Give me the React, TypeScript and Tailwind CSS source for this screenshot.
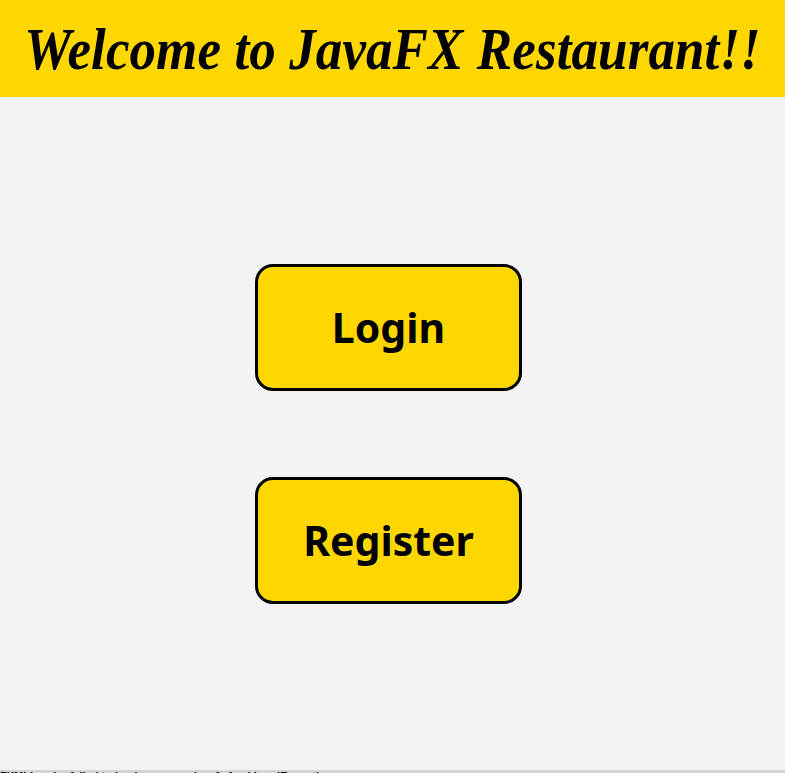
import React from 'react';

const MenuButton: React.FC<{ label: string }> = ({ label }) => (
  <button className="w-[267px] h-[127px] rounded-[18px] border-[3px] border-black bg-[#ffd700] text-[41px] font-bold text-black font-['Noto_Sans',sans-serif] leading-none">
    {label}
  </button>
);

export default function App() {
  return (
    <div className="w-[785px] h-[773px] bg-[#f3f3f3] flex flex-col overflow-hidden">
      <header className="h-[97px] bg-[#ffd700] flex items-center justify-center shrink-0">
        <h1 className="font-['Liberation_Serif',serif] italic font-bold text-[53px] text-black leading-none tracking-[0.1px] mt-[1px] scale-y-[1.12]">
          Welcome to JavaFX Restaurant!!
        </h1>
      </header>
      <main className="flex-1 flex flex-col items-center pt-[167px] gap-[86px] pr-[8px]">
        <MenuButton label="Login" />
        <MenuButton label="Register" />
      </main>
      <div className="h-[3px] overflow-hidden shrink-0 bg-[#d4d4d4]">
        <p className="font-['Liberation_Sans',sans-serif] font-bold text-[11px] leading-none text-black pt-[1px] whitespace-nowrap">
          FXMLLoader failed to load resource: javafx.fxml.LoadException
        </p>
      </div>
    </div>
  );
}
